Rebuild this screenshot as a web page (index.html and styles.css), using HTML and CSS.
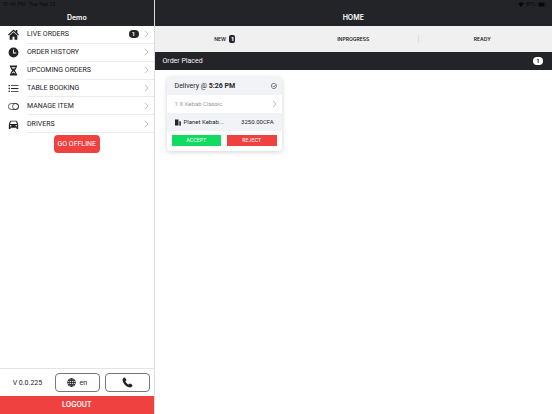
FILE: index.html
```html
<!DOCTYPE html>
<html lang="en">
<head>
<meta charset="utf-8">
<title>Home</title>
<link rel="stylesheet" href="styles.css">
</head>
<body>
<svg class="defs" aria-hidden="true">
  <symbol id="chevron" viewBox="0 0 5 8"><path d="M1 .8 4 4 1 7.2" fill="none" stroke="currentColor" stroke-width=".8"/></symbol>
</svg>
<div class="status">
  <span class="clock">10:40 PM</span>
  <span>Tue Feb 25</span>
  <span class="power">
    <svg width="6" height="5" viewBox="0 0 12 10"><path d="M0 3a9 9 0 0 1 12 0L6 10z" fill="currentColor"/></svg>
    81%
    <svg width="9" height="5" viewBox="0 0 18 10"><rect x=".5" y=".5" width="14" height="9" rx="2.5" fill="none" stroke="currentColor" opacity=".6"/><rect x="1.5" y="1.5" width="11" height="7" rx="1.5" fill="currentColor"/><path d="M16 3.5q2 1.5 0 3z" fill="currentColor"/></svg>
  </span>
</div>
<div class="app">
  <aside class="sidebar">
    <header class="bar">Demo</header>
    <nav class="menu">
      <a href="#live"><svg class="icon" viewBox="0 0 20 20"><path d="M10 1 0 10l1.500 1.700L10 4.100l8.500 7.600L20 10l-3-2.700V2h-3v2.600zM3 12v7.500h5.200V14h3.600v5.500H17V12l-7-6.200z"/></svg><span class="entry">LIVE ORDERS<b class="pill">1</b><svg class="chevron"><use href="#chevron"/></svg></span></a>
      <a href="#history"><svg class="icon" viewBox="0 0 20 20"><path fill-rule="evenodd" d="M10 1a9 9 0 1 0 0 18 9 9 0 0 0 0-18zM9.200 4.500h1.600v5.700H15v1.600H9.200z"/></svg><span class="entry">ORDER HISTORY<svg class="chevron"><use href="#chevron"/></svg></span></a>
      <a href="#upcoming"><svg class="icon" viewBox="0 0 20 20"><path fill-rule="evenodd" d="M3.500 1h13v3h-1.200c0 3-1.500 4.500-3.300 6 1.800 1.500 3.300 3 3.300 6h1.200v3h-13v-3h1.200c0-3 1.500-4.500 3.300-6-1.800-1.500-3.300-3-3.300-6H3.500zM6.500 4c.1 1 .4 1.800 1 2.500h5c.6-.7.9-1.500 1-2.500zM10 11.500c-1.500 1.200-3 2.300-3.400 4.500L10 13.800l3.400 2.200c-.4-2.200-1.900-3.300-3.400-4.500z"/></svg><span class="entry">UPCOMING ORDERS<svg class="chevron"><use href="#chevron"/></svg></span></a>
      <a href="#table"><svg class="icon" viewBox="0 0 20 20"><path d="M1 3.500h2.500V6H1zM1 8.800h2.500v2.500H1zM1 14h2.500v2.500H1zM5.500 4H19v1.600H5.500zM5.500 9.300H19v1.600H5.500zM5.500 14.500H19v1.600H5.500z"/></svg><span class="entry">TABLE BOOKING<svg class="chevron"><use href="#chevron"/></svg></span></a>
      <a href="#items"><svg class="icon" viewBox="0 0 20 20"><g fill="none" stroke="currentColor" stroke-width="1.300"><rect x=".7" y="4.500" width="18.600" height="11" rx="5.500"/><circle cx="13.800" cy="10" r="5.500"/></g></svg><span class="entry">MANAGE ITEM<svg class="chevron"><use href="#chevron"/></svg></span></a>
      <a href="#drivers"><svg class="icon" viewBox="0 0 20 20"><path fill-rule="evenodd" d="M5 3h10q1.200 0 1.600 1.200L18.500 10v8h-3v-2h-11v2h-3v-8l1.900-5.800Q3.800 3 5 3zM5.300 4.700 3.900 9h12.200l-1.400-4.300zM5 11a1.400 1.400 0 1 0 0 2.800A1.400 1.400 0 0 0 5 11zm10 0a1.400 1.400 0 1 0 0 2.800 1.400 1.400 0 0 0 0-2.800z"/></svg><span class="entry">DRIVERS<svg class="chevron"><use href="#chevron"/></svg></span></a>
    </nav>
    <button class="offline">GO OFFLINE</button>
    <footer class="tools">
      <span class="version">V 0.0.225</span>
      <button class="tool"><svg width="9" height="9" viewBox="0 0 16 16" fill="none" stroke="currentColor" stroke-width="1.500"><circle cx="8" cy="8" r="7"/><ellipse cx="8" cy="8" rx="3.500" ry="7"/><path d="M8 1v14M1 8h14M2 4.500h12M2 11.500h12"/></svg>en</button>
      <button class="tool" aria-label="Call"><svg width="11" height="11" viewBox="0 0 20 20"><path fill="currentColor" d="M4.500.8C2.500 1.500 1 3 1 5c.5 7 7 13.700 14 14 2 0 3.500-1.500 4.200-3.400.2-.8-3.700-3.500-4.700-3.600-1.100 0-1.800 2-2.800 1.600C9.500 12.700 7.300 10.500 6.400 8.300 6 7.300 8 6.600 8 5.500 7.900 4.500 5.300.6 4.500.8z"/></svg></button>
    </footer>
    <button class="logout">LOGOUT</button>
  </aside>
  <main class="main">
    <header class="bar">HOME</header>
    <nav class="tabs">
      <button>NEW<b class="count">1</b></button>
      <button>INPROGRESS</button>
      <button>READY</button>
    </nav>
    <h2 class="section">Order Placed<b class="pill light">1</b></h2>
    <article class="card">
      <div class="row shaded title"><span>Delivery @ <b>5:26 PM</b></span><svg width="6" height="6" viewBox="0 0 12 12" fill="none" stroke="currentColor" stroke-width="1.200"><path d="M10.800 4.500A5.200 5.200 0 1 1 9 1.800M3.500 5.800l2.200 2.200L11 2"/></svg></div>
      <a class="row item" href="#order">1 X Kebab Classic<svg class="chevron"><use href="#chevron"/></svg></a>
      <div class="row shaded customer"><svg width="6" height="7" viewBox="0 0 12 14"><path fill="currentColor" d="M0 1h7v12H0zM8 5h4v8H8z"/><path d="M8.500 7h2M8.500 9h2M8.500 11h2" stroke="#f2f3f7"/></svg><span>Planet Kebab...</span><span class="price">3250.00CFA</span></div>
      <div class="actions"><button class="accept">ACCEPT</button><button class="reject">REJECT</button></div>
    </article>
  </main>
</div>
</body>
</html>
```

FILE: styles.css
```css
* { box-sizing: border-box; }

body {
  margin: 0;
  background: #fff;
  color: #222428;
  font: 7px/10px Roboto, "Liberation Sans", sans-serif;
}

button {
  margin: 0;
  padding: 0;
  border: 0;
  background: none;
  color: inherit;
  font: inherit;
}

a { color: inherit; text-decoration: none; }

svg { flex: none; }

.defs { position: absolute; width: 0; height: 0; }

.status {
  position: absolute;
  top: 0;
  left: 0;
  right: 0;
  display: flex;
  gap: 4px;
  padding: 0 5px 0 3px;
  color: #08090a;
  font-family: Inter, sans-serif;
  font-size: 5px;
  line-height: 9px;
}

.power { display: flex; align-items: center; gap: 2px; margin-left: auto; }

.app { display: flex; min-height: 100vh; }

.sidebar {
  display: flex;
  flex: 0 0 28%;
  flex-direction: column;
  border-right: 1px solid #dcdcde;
}

.main { flex: 1; }

.bar {
  height: 26px;
  padding-top: 13px;
  background: #222428;
  color: #fff;
  font-family: Inter, sans-serif;
  font-weight: 600;
  line-height: 9px;
  text-align: center;
}

.menu { display: grid; grid-auto-rows: 1fr; height: 107px; }

.menu a { display: flex; align-items: center; gap: 8px; padding-left: 8px; }

.icon { width: 11px; height: 11px; fill: currentColor; }

.entry {
  display: flex;
  flex: 1;
  align-items: center;
  align-self: stretch;
  padding-right: 5px;
  border-bottom: 1px solid #ececee;
}

.chevron { width: 5px; height: 8px; margin-left: auto; color: #aaabad; }

.pill {
  min-width: 10px;
  margin-left: auto;
  padding: 0 3px;
  border-radius: 4px;
  background: #222428;
  color: #fff;
  font-size: 6px;
  line-height: 8px;
  text-align: center;
}

.pill + .chevron { margin-left: 5px; }

.pill.light { background: #fff; color: #222428; }

.offline {
  align-self: center;
  margin-top: 2px;
  padding: 0 4px;
  border-radius: 4px;
  background: #f04141;
  color: #fff;
  line-height: 18px;
}

.tools {
  display: grid;
  grid-template-columns: 1fr 1fr 1fr;
  gap: 5px;
  align-items: center;
  margin-top: auto;
  padding: 4px 4px 4px 5px;
  border-top: 1px solid #e4e4e6;
}

.version { text-align: center; }

.tool {
  display: flex;
  align-items: center;
  justify-content: center;
  gap: 3px;
  height: 19px;
  border: 1px solid #77787b;
  border-radius: 4px;
}

.logout {
  background: #f04141;
  color: #fff;
  font-family: Inter, sans-serif;
  font-weight: 600;
  line-height: 18px;
}

.tabs {
  display: grid;
  grid-template-columns: repeat(3, 1fr);
  align-items: center;
  height: 26px;
  padding: 0 6px;
  background: #f0f0f0;
}

.tabs button {
  display: flex;
  align-items: center;
  justify-content: center;
  gap: 3px;
  height: 8px;
  font-family: Inter, sans-serif;
  font-size: 5px;
  font-weight: 600;
}

.tabs button:last-child { border-left: 1px solid #dedede; }

.count {
  padding: 0 2px;
  border-radius: 2px;
  background: #222428;
  color: #fff;
  line-height: 8px;
}

.section {
  display: flex;
  align-items: center;
  margin: 0;
  padding: 0 9px 0 8px;
  background: #222428;
  color: #f4f5f8;
  font-size: 7px;
  font-weight: 400;
  line-height: 18px;
}

.card {
  width: 115px;
  margin: 7px 12px;
  overflow: hidden;
  border-radius: 4px;
  box-shadow: 0 1px 5px rgba(0, 0, 0, .18);
}

.row {
  display: flex;
  align-items: center;
  height: 18px;
  padding: 0 5px 0 8px;
}

.shaded { background: #f2f3f7; }

.title { justify-content: space-between; }

.item { color: #999a9c; font-size: 6px; }

.row.customer { gap: 3px; padding-right: 8px; font-size: 6px; }

.price { margin-left: auto; }

.actions {
  display: grid;
  grid-template-columns: 1fr 1fr;
  gap: 6px;
  padding: 4px 5px 5px;
}

.actions button {
  color: #fff;
  font-family: Inter, sans-serif;
  font-size: 5px;
  line-height: 11px;
}

.accept { background: #10dc60; }

.reject { background: #f04141; }
```
